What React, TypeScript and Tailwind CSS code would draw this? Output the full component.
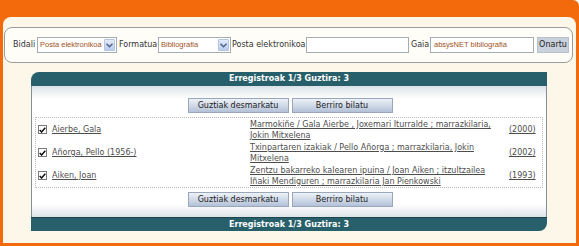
import React from "react";

const rows = [
  {
    author: "Aierbe, Gala",
    title: "Marmokiñe / Gala Aierbe , Joxemari Iturralde ; marrazkilaria, Jokin Mitxelena",
    year: "(2000)",
  },
  {
    author: "Añorga, Pello (1956-)",
    title: "Txinpartaren izakiak / Pello Añorga ; marrazkilaria, Jokin Mitxelena",
    year: "(2002)",
  },
  {
    author: "Aiken, Joan",
    title: "Zentzu bakarreko kalearen ipuina / Joan Aiken ; itzultzailea Iñaki Mendiguren ; marrazkilaria Jan Pienkowski",
    year: "(1993)",
  },
];

function SelectBox({ value, width }: { value: string; width: string }) {
  return (
    <div className={`flex h-[16px] shrink-0 items-stretch border border-[#a5acb2] bg-white ${width}`}>
      <span className="flex-1 overflow-hidden whitespace-nowrap pl-[2px] text-[7.5px] leading-[14px] text-[#a0521e] [font-family:'Liberation_Sans',Arial,sans-serif]">
        {value}
      </span>
      <span className="m-px flex w-[11px] shrink-0 items-center justify-center rounded-[1px] border border-[#b5c4e0] bg-gradient-to-b from-[#e3ebfa] to-[#b9cbef]">
        <svg width="7" height="5" viewBox="0 0 7 5">
          <path d="M0.5 0.8 L3.5 3.8 L6.5 0.8" fill="none" stroke="#4d6185" strokeWidth="1.4" />
        </svg>
      </span>
    </div>
  );
}

function BlueButton({ children }: { children: React.ReactNode }) {
  return (
    <button className="h-[15px] w-[101px] border border-[#9aa7bb] bg-gradient-to-b from-[#eef2f8] to-[#b3c1d8] text-[8px] leading-[13px] text-[#222] [font-family:'DejaVu_Sans',Verdana,sans-serif]">
      {children}
    </button>
  );
}

function Check() {
  return (
    <span className="flex h-[9px] w-[9px] items-center justify-center border border-[#7a7a7a] bg-white">
      <svg width="7" height="6" viewBox="0 0 7 6">
        <path d="M0.7 3 L2.6 5 L6.3 0.8" fill="none" stroke="#111" strokeWidth="1.5" />
      </svg>
    </span>
  );
}

function Bar({ bottom }: { bottom?: boolean }) {
  return (
    <div
      className={`flex h-[14px] items-center justify-center bg-[#275f6b] text-[8px] font-bold text-white [font-family:'DejaVu_Sans',Verdana,sans-serif] ${
        bottom ? "rounded-br-[8px] border-t border-[#1b444d]" : "rounded-tl-[8px]"
      }`}
    >
      Erregistroak 1/3 Guztira: 3
    </div>
  );
}

export default function App() {
  return (
    <div className="flex h-[246px] w-[579px] flex-col rounded-tr-[6px] bg-[#f26a0c] px-[3px] pb-[3px] pt-[17px]">
      <div className="flex flex-1 flex-col rounded-t-[8px] bg-[#fdf7ea] pl-px pr-[3px] pt-[10px]">
        {/* search form */}
        <div className="flex h-[36px] items-center whitespace-nowrap rounded-[8px] border border-[#9c9c9c] bg-[#fffdf8] pl-[8px] text-[8px] text-[#333] [font-family:'DejaVu_Sans',Verdana,sans-serif]">
          <span className="w-[24px] shrink-0">Bidali</span>
          <SelectBox value="Posta elektronikoa" width="w-[80px]" />
          <span className="w-[41px] shrink-0 pl-[2px]">Formatua</span>
          <SelectBox value="Bibliografia" width="w-[73px]" />
          <span className="w-[75px] shrink-0 pl-px">Posta elektronikoa</span>
          <div className="h-[16px] w-[103px] shrink-0 border border-[#a5acb2] bg-white" />
          <span className="w-[21px] shrink-0 pl-[2px]">Gaia</span>
          <div className="flex h-[16px] w-[104px] shrink-0 items-center border border-[#a5acb2] bg-white pl-[3px] text-[7.5px] text-[#a0521e] [font-family:'Liberation_Sans',Arial,sans-serif]">
            absysNET bibliografia
          </div>
          <button className="ml-[3px] h-[16px] w-[32px] shrink-0 border border-[#b9c1cc] bg-[#c9d1dc] text-[8px] text-[#222]">
            Onartu
          </button>
        </div>

        {/* results */}
        <div className="ml-[27px] mt-[9px] w-[516px]">
          <Bar />
          <div className="flex h-[131px] flex-col items-stretch border-x border-[#7e8f96] bg-[linear-gradient(to_bottom,#dbe3e8_0px,#ffffff_13px,#ffffff_118px,#dde3e7_131px)] px-[3px] pt-[12px]">
            <div className="flex justify-center gap-[3px] pl-[2px]">
              <BlueButton>Guztiak desmarkatu</BlueButton>
              <BlueButton>Berriro bilatu</BlueButton>
            </div>
            <div className="mt-[4px] border border-dotted border-[#b8b8b8] text-[8px] text-[#4d4d4d] [font-family:'DejaVu_Sans',Verdana,sans-serif]">
              {rows.map((r) => (
                <div key={r.year} className="grid grid-cols-[16px_198px_1fr_36px] items-center py-[0.5px] leading-[11px]">
                  <div className="pl-[2px]">
                    <Check />
                  </div>
                  <span className="underline">{r.author}</span>
                  <span className="underline">{r.title}</span>
                  <span className="pl-[3px] underline">{r.year}</span>
                </div>
              ))}
            </div>
            <div className="mt-[4px] flex justify-center gap-[3px] pl-[2px]">
              <BlueButton>Guztiak desmarkatu</BlueButton>
              <BlueButton>Berriro bilatu</BlueButton>
            </div>
          </div>
          <Bar bottom />
        </div>
      </div>
    </div>
  );
}
